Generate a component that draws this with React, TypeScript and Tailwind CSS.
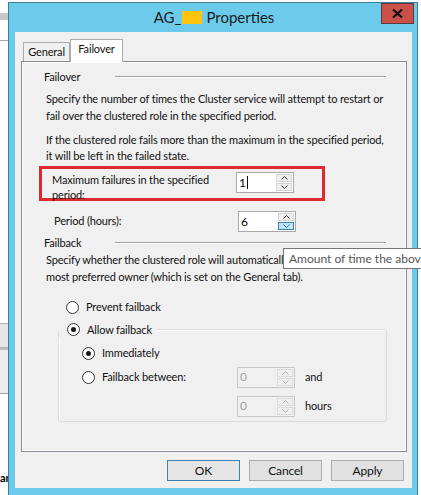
import React from "react";

const font = { fontFamily: "Lato, 'Liberation Sans', Arial, sans-serif" };

function Spin({ value, disabled, hot, caret }: { value: string; disabled?: boolean; hot?: boolean; caret?: boolean }) {
    const border = disabled ? "border-[#c8c8c8]" : "border-[#a9a9a9]";
    const text = disabled ? "text-[#a0a0a0]" : "text-black";
    return (
        <div className={`flex h-[21px] w-[58px] border ${border} ${disabled ? "bg-[#f0f0f0]" : "bg-white"}`}>
            <div className={`flex flex-1 items-center pl-[2px] text-[12px] ${text}`}>
                {value}
                {caret && <span className="ml-[1px] inline-block h-[13px] w-[1px] bg-black" />}
            </div>
            <div className="flex w-[17px] flex-col gap-[1px] p-[1px] pl-0">
                <div className={`flex flex-1 items-center justify-center border ${disabled ? "border-[#dcdcdc]" : "border-[#d4d4d4]"} bg-[#efefef]`}>
                    <svg width="7" height="4" viewBox="0 0 7 4"><path d="M0.5 3.5 L3.5 0.5 L6.5 3.5" fill="none" stroke={disabled ? "#b0b0b0" : "#333"} strokeWidth="1" /></svg>
                </div>
                <div className={`flex flex-1 items-center justify-center border ${hot ? "border-[#3c7fb1] bg-[#bee6fd]" : disabled ? "border-[#dcdcdc] bg-[#efefef]" : "border-[#d4d4d4] bg-[#efefef]"}`}>
                    <svg width="7" height="4" viewBox="0 0 7 4"><path d="M0.5 0.5 L3.5 3.5 L6.5 0.5" fill="none" stroke={hot ? "#2a6ea6" : disabled ? "#b0b0b0" : "#333"} strokeWidth="1" /></svg>
                </div>
            </div>
        </div>
    );
}

function Radio({ checked }: { checked?: boolean }) {
    return (
        <span className="flex h-[13px] w-[13px] shrink-0 items-center justify-center rounded-full border border-[#333] bg-white">
            {checked && <span className="h-[5px] w-[5px] rounded-full bg-[#1a1a1a]" />}
        </span>
    );
}

function GroupHeader({ label }: { label: string }) {
    return (
        <div className="flex h-[16px] items-center">
            <span className="w-[71px]">{label}</span>
            <div className="h-[2px] w-[271px] border-t border-b border-t-[#a0a0a0] border-b-white" />
        </div>
    );
}

function Button({ label, def }: { label: string; def?: boolean }) {
    return (
        <div className={`flex h-[21px] w-[73px] items-center justify-center border text-[12px] ${def ? "border-[#3c7fb1] bg-[#e5e5e5]" : "border-[#adadad] bg-[#e1e1e1]"}`}>
            {label}
        </div>
    );
}

export default function App() {
    return (
        <div className="relative flex h-[495px] w-[421px] overflow-hidden whitespace-nowrap bg-white text-[#111]" style={font}>
            {/* desktop behind, left edge */}
            <div className="flex w-[8px] flex-col overflow-hidden">
                <div className="mt-[13px] h-[7px] bg-[#c8c8c8]" />
                <div className="mt-[20px] h-[1px] bg-[#a8a8a8]" />
                <div className="mt-[282px] h-[25px] border-y border-[#b0b0b0] bg-[#e6e6e6]" />
                <div className="h-[2px] bg-[#c0c0c0]" />
                <div className="h-[44px] border-b border-[#a0a0a0] bg-[#ececec]" />
                <div className="mt-[78px] text-[11px] font-bold leading-none text-black">an</div>
            </div>

            {/* window */}
            <div className="mt-[2px] flex h-[500px] w-[410px] flex-col border border-[#3a7f9c] bg-[#6ccbeb]">
                <div className="flex h-[29px] items-start">
                    <div className="flex h-[29px] flex-1 items-center justify-center pl-[38px] text-[15px] text-[#1c1c1c]">
                        AG_
                        <span className="ml-[1px] mr-[4px] inline-block h-[13px] w-[20px] bg-[#ffc40f]" />
                        Properties
                    </div>
                    <div className="mr-[3px] flex h-[21px] w-[33px] items-center justify-center border border-[#5a3a3a] bg-[#c9514a]">
                        <svg width="11" height="9" viewBox="0 0 11 9"><path d="M1 0.5 L10 8.5 M10 0.5 L1 8.5" stroke="#111" strokeWidth="2.2" /></svg>
                    </div>
                </div>

                <div className="ml-[6px] mr-[5px] flex h-[456px] flex-col bg-[#f0f0f0] px-[6px] pt-[8px] text-[11px] tracking-[-0.15px]">
                    {/* tabs */}
                    <div className="flex h-[21px] items-end pl-[2px]">
                        <div className="flex h-[19px] w-[47px] items-center justify-center border border-b-0 border-[#acacac] bg-[#f0f0f0]">General</div>
                        <div className="relative z-10 -mb-[1px] flex h-[23px] w-[53px] items-center justify-center border border-b-0 border-[#acacac] bg-white pb-[3px]">Failover</div>
                    </div>

                    {/* tab panel */}
                    <div className="flex h-[391px] w-[386px] flex-col border border-[#898c95] bg-white p-[1px]">
                        <div className="flex flex-1 flex-col bg-[#f0f0f0] pl-[21px] pt-[6px]">
                            <GroupHeader label="Failover" />
                            <div className="mt-[5px] pl-[2px] leading-[17px]">
                                <div>Specify the number of times the Cluster service will attempt to restart or</div>
                                <div>fail over the clustered role in the specified period.</div>
                            </div>
                            <div className="mt-[8px] pl-[2px] leading-[16px]">
                                <div>If the clustered role fails more than the maximum in the specified period,</div>
                                <div>it will be left in the failed state.</div>
                            </div>

                            <div className="-ml-[5px] mt-[2px] flex h-[35px] w-[286px] items-start border-[3px] border-[#dc2a2e] pl-[10px] pt-[3px]">
                                <div className="w-[184px] leading-[15px]">
                                    Maximum failures in the specified<br />period:
                                </div>
                                <Spin value="1" caret />
                            </div>

                            <div className="mt-[10px] flex items-center pl-[10px]">
                                <div className="w-[184px]">Period (hours):</div>
                                <Spin value="6" hot />
                            </div>

                            <div className="mt-[3px]">
                                <GroupHeader label="Failback" />
                            </div>
                            <div className="pl-[2px] leading-[17px]">
                                <div>Specify whether the clustered role will automaticall</div>
                                <div>most preferred owner (which is set on the General tab).</div>
                            </div>

                            <div className="mt-[14px] flex items-center gap-[7px] pl-[22px]">
                                <Radio />
                                <span>Prevent failback</span>
                            </div>

                            <div className="ml-[14px] mt-[13px] flex h-[93px] w-[329px] flex-col rounded-[3px] border border-[#dcdcdc] shadow-[inset_1px_1px_0_#fff]">
                                <div className="-mt-[8px] flex w-fit items-center gap-[7px] bg-[#f0f0f0] pl-[8px] pr-[6px]">
                                    <Radio checked />
                                    <span>Allow failback</span>
                                </div>
                                <div className="mt-[7px] flex items-center gap-[7px] pl-[23px]">
                                    <Radio checked />
                                    <span>Immediately</span>
                                </div>
                                <div className="mt-[5px] flex items-center pl-[23px]">
                                    <Radio />
                                    <span className="ml-[7px] w-[135px]">Failback between:</span>
                                    <Spin value="0" disabled />
                                    <span className="ml-[10px]">and</span>
                                </div>
                                <div className="mt-[8px] flex items-center pl-[178px]">
                                    <Spin value="0" disabled />
                                    <span className="ml-[10px]">hours</span>
                                </div>
                            </div>
                        </div>
                    </div>

                    {/* buttons */}
                    <div className="mt-[8px] flex justify-end gap-[9px] pr-[2px]">
                        <Button label="OK" def />
                        <Button label="Cancel" />
                        <Button label="Apply" />
                    </div>
                </div>
            </div>

            {/* tooltip, cut by the screen edge */}
            <div className="absolute left-[283px] top-[248px] flex h-[21px] w-[150px] items-center border border-[#767676] bg-white pl-[5px] text-[12px] text-[#575757]">
                Amount of time the abov
            </div>
        </div>
    );
}
